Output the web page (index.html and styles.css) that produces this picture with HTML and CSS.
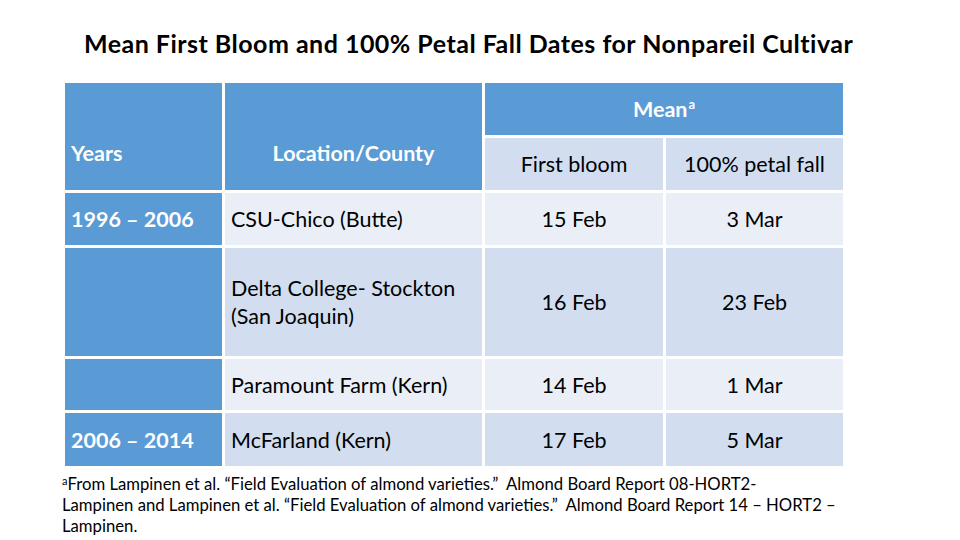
FILE: index.html
```html
<!DOCTYPE html>
<html lang="en">
<head>
<meta charset="utf-8">
<title>Mean First Bloom and 100% Petal Fall Dates for Nonpareil Cultivar</title>
<link rel="stylesheet" href="styles.css">
</head>
<body>
<h1 class="title">Mean First Bloom and 100% Petal Fall Dates for Nonpareil Cultivar</h1>
<table class="bloom">
  <colgroup>
    <col class="c-years">
    <col class="c-loc">
    <col class="c-date">
    <col class="c-date2">
  </colgroup>
  <thead>
    <tr class="h1">
      <th rowspan="2" class="hd hd-years">Years</th>
      <th rowspan="2" class="hd hd-loc">Location/County</th>
      <th colspan="2" class="hd hd-mean">Mean<sup>a</sup></th>
    </tr>
    <tr class="h2">
      <th class="sub band-dark">First bloom</th>
      <th class="sub band-dark">100% petal fall</th>
    </tr>
  </thead>
  <tbody>
    <tr class="r1">
      <td class="yr">1996 – 2006</td>
      <td class="loc band-light">CSU-Chico (Butte)</td>
      <td class="dt band-light">15 Feb</td>
      <td class="dt band-light">3 Mar</td>
    </tr>
    <tr class="r2">
      <td class="yr"></td>
      <td class="loc band-dark">Delta College- Stockton<br>(San Joaquin)</td>
      <td class="dt band-dark">16 Feb</td>
      <td class="dt band-dark">23 Feb</td>
    </tr>
    <tr class="r3">
      <td class="yr"></td>
      <td class="loc band-light">Paramount Farm (Kern)</td>
      <td class="dt band-light">14 Feb</td>
      <td class="dt band-light">1 Mar</td>
    </tr>
    <tr class="r4">
      <td class="yr">2006 – 2014</td>
      <td class="loc band-dark">McFarland (Kern)</td>
      <td class="dt band-dark">17 Feb</td>
      <td class="dt band-dark">5 Mar</td>
    </tr>
  </tbody>
</table>
<p class="note"><sup>a</sup>From Lampinen et al. “Field Evaluation of almond varieties.”&nbsp; Almond Board Report 08-HORT2-<br>Lampinen and Lampinen et al. “Field Evaluation of almond varieties.”&nbsp; Almond Board Report 14 – HORT2 –<br>Lampinen.</p>
</body>
</html>
```

FILE: styles.css
```css
html, body {
  margin: 0;
  padding: 0;
  background: #ffffff;
}
body {
  width: 960px;
  height: 540px;
  overflow: hidden;
  font-family: Lato, "Open Sans", sans-serif;
  color: #000;
}
.title {
  margin: 0;
  padding: 28px 0 0 84px;
  height: 80px;
  box-sizing: border-box;
  font-size: 25px;
  line-height: 30px;
  letter-spacing: 0.48px;
  font-weight: 700;
  white-space: nowrap;
}
.bloom {
  margin: 0 0 0 62px;
  border-collapse: separate;
  border-spacing: 3px;
  table-layout: fixed;
  width: 784px;
  font-size: 21.5px;
}
.c-years { width: 157px; }
.c-loc { width: 257px; }
.c-date { width: 178px; }
.c-date2 { width: 177px; }
.bloom th, .bloom td {
  padding: 0;
  line-height: 28px;
  font-weight: 400;
}
.h1 { height: 52px; }
.h2 { height: 52px; }
.r1 { height: 52px; }
.r2 { height: 108px; }
.r3 { height: 51px; }
.r4 { height: 53px; }
.hd {
  background: #5b9bd5;
  color: #fff;
  font-weight: 700 !important;
}
.hd-years {
  text-align: left;
  padding: 32px 0 0 6px !important;
  vertical-align: middle;
}
.hd-loc {
  text-align: center;
  padding-top: 32px !important;
  vertical-align: middle;
}
.hd-mean {
  text-align: center;
  vertical-align: middle;
}
.hd-mean sup {
  font-size: 13px;
  line-height: 0;
  vertical-align: 8px;
  margin-left: 1px;
}
.sub {
  text-align: center;
  vertical-align: middle;
}
.band-dark { background: #d2deef; }
.band-light { background: #eaeff7; }
.yr {
  background: #5b9bd5;
  color: #fff;
  font-weight: 700 !important;
  padding-left: 6px !important;
  vertical-align: middle;
}
.loc {
  padding-left: 6px !important;
  vertical-align: middle;
}
.dt {
  text-align: center;
  vertical-align: middle;
}
.note {
  margin: 5px 0 0 62px;
  font-size: 16.7px;
  line-height: 21px;
  white-space: nowrap;
}
.note sup {
  font-size: 11px;
  line-height: 0;
  vertical-align: 5px;
}
```
